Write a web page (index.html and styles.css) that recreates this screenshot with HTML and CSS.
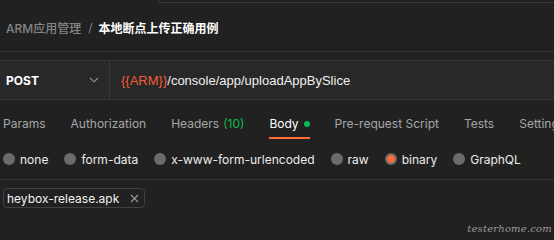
FILE: index.html
```html
<!DOCTYPE html>
<html>
<head>
<meta charset="utf-8">
<link rel="stylesheet" href="styles.css">
</head>
<body>
<div class="page">
  <div class="topstub"></div>
  <div class="crumbs">
    <span class="crumb-parent">ARM应用管理</span>
    <span class="crumb-sep">/</span>
    <span class="crumb-current">本地断点上传正确用例</span>
  </div>
  <div class="reqbar">
    <div class="method">
      <span class="method-name">POST</span>
      <svg class="chevron" width="10" height="6" viewBox="0 0 10 6"><path d="M1 1 L5 5 L9 1" fill="none" stroke="#8a8a8a" stroke-width="1.2"/></svg>
    </div>
    <div class="url"><span class="var">{{ARM}}</span>/console/app/uploadAppBySlice</div>
  </div>
  <div class="tabs">
    <span class="tab">Params</span>
    <span class="tab">Authorization</span>
    <span class="tab">Headers <span class="count">(10)</span></span>
    <span class="tab active">Body <span class="dot"></span></span>
    <span class="tab">Pre-request Script</span>
    <span class="tab">Tests</span>
    <span class="tab">Settings</span>
  </div>
  <div class="radios">
    <span class="radio"><span class="circle"></span>none</span>
    <span class="radio"><span class="circle"></span>form-data</span>
    <span class="radio"><span class="circle"></span>x-www-form-urlencoded</span>
    <span class="radio"><span class="circle"></span>raw</span>
    <span class="radio"><span class="circle checked"></span>binary</span>
    <span class="radio"><span class="circle"></span>GraphQL</span>
  </div>
  <div class="files">
    <span class="chip">heybox-release.apk<svg class="close" width="9" height="9" viewBox="0 0 9 9"><path d="M1 1 L8 8 M8 1 L1 8" stroke="#9a9a9a" stroke-width="1.1"/></svg></span>
  </div>
  <div class="watermark">testerhome.com</div>
</div>
</body>
</html>
```
FILE: styles.css
```css
html, body {
  margin: 0;
  padding: 0;
  background: #212121;
}
body {
  width: 554px;
  height: 240px;
  overflow: hidden;
  font-family: Inter, "Noto Sans CJK SC", sans-serif;
  font-size: 12px;
  color: #e6e6e6;
}
.page {
  position: relative;
  height: 240px;
}
.topstub {
  height: 3px;
  margin-left: 158px;
  box-sizing: border-box;
  border-left: 1px solid #383838;
  border-bottom: 1px solid #383838;
}
.crumbs {
  height: 48px;
  display: flex;
  align-items: center;
  padding-left: 6px;
  border-bottom: 1px solid #333;
  white-space: nowrap;
}
.crumb-parent {
  color: #858585;
  font-size: 12px;
  font-weight: 500;
}
.crumb-sep {
  color: #858585;
  margin: 0 6px 0 7px;
}
.crumb-current {
  color: #ffffff;
  font-weight: 700;
  font-family: "Noto Sans CJK SC", sans-serif;
}
.reqbar {
  margin-top: 8px;
  height: 38px;
  display: flex;
  background: #282828;
  border-top: 1px solid #363636;
  border-bottom: 1px solid #363636;
}
.method {
  width: 110px;
  display: flex;
  align-items: center;
  justify-content: space-between;
  padding: 0 10px 0 6px;
  box-sizing: border-box;
  border-right: 1px solid #3a3a3a;
}
.method-name {
  font-weight: 700;
  font-size: 12px;
  color: #ffffff;
}
.chevron {
  display: block;
}
.url {
  display: flex;
  align-items: center;
  padding-left: 11px;
  font-family: "Liberation Sans", Arial, sans-serif;
  font-size: 13px;
  color: #f0f0f0;
  white-space: nowrap;
}
.var {
  color: #f45c35;
}
.tabs {
  display: flex;
  gap: 25px;
  padding-left: 3px;
  height: 39px;
  white-space: nowrap;
}
.tab {
  display: flex;
  align-items: center;
  gap: 4px;
  box-sizing: border-box;
  padding-top: 10px;
  height: 39px;
  border-bottom: 2px solid transparent;
  color: #a6a6a6;
  font-size: 12px;
}
.tab.active {
  color: #ffffff;
  border-bottom-color: #ff6c37;
}
.count {
  color: #0cbb52;
}
.dot {
  width: 6px;
  height: 6px;
  border-radius: 50%;
  background: #0cbb52;
  margin-left: 1px;
}
.radios {
  display: flex;
  align-items: center;
  gap: 16px;
  padding-left: 3px;
  height: 40px;
  border-bottom: 1px solid #333;
  white-space: nowrap;
}
.radio {
  display: flex;
  align-items: center;
  gap: 5px;
  color: #ececec;
  font-size: 12px;
}
.circle {
  width: 12px;
  height: 12px;
  border-radius: 50%;
  background: #6b6b6b;
}
.circle.checked {
  background: radial-gradient(circle, #ff6c37 3.5px, #6b6b6b 4.3px);
}
.files {
  padding: 8px 0 0 3px;
  display: flex;
}
.chip {
  display: flex;
  align-items: center;
  height: 20px;
  box-sizing: border-box;
  padding: 0 5px 0 3px;
  gap: 11px;
  border: 1px solid #404040;
  border-radius: 4px;
  color: #f2f2f2;
  font-size: 12px;
}
.close {
  display: block;
}
.watermark {
  position: absolute;
  right: 2px;
  bottom: 6px;
  font-family: "DejaVu Serif", serif;
  font-style: italic;
  font-size: 10px;
  color: #9a9a9a;
  letter-spacing: 0.2px;
}
```
